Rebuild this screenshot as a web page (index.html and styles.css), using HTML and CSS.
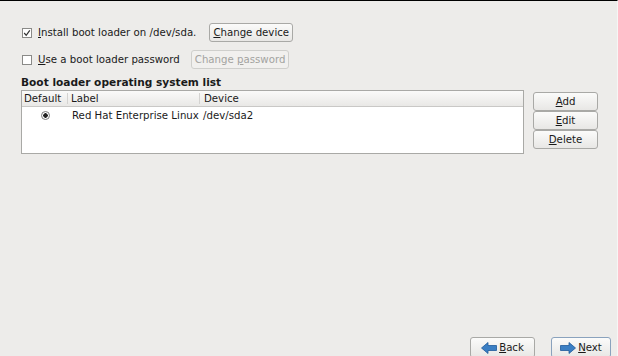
FILE: index.html
```html
<!DOCTYPE html>
<html lang="en">
<head>
    <meta charset="UTF-8">
    <title>Boot loader configuration</title>
    <link rel="stylesheet" href="styles.css">
</head>
<body>
    <div class="screen">
        <div class="content">
            <div class="opt-row">
                <label class="check">
                    <span class="box"><svg width="8" height="8" viewBox="0 0 8 8"><path d="M1.2 4 L3.2 6.3 L6.8 1.3" fill="none" stroke="#333" stroke-width="1.2"/></svg></span>
                    <span><u>I</u>nstall boot loader on /dev/sda.</span>
                </label>
                <button class="btn"><span><u>C</u>hange device</span></button>
            </div>
            <div class="opt-row second">
                <label class="check">
                    <span class="box"></span>
                    <span><u>U</u>se a boot loader password</span>
                </label>
                <button class="btn" disabled><span>Change <u>p</u>assword</span></button>
            </div>

            <h3 class="heading">Boot loader operating system list</h3>

            <div class="list-area">
                <div class="table">
                    <div class="thead">
                        <div class="col col-default">Default</div>
                        <div class="col col-label">Label</div>
                        <div class="col col-device">Device</div>
                    </div>
                    <div class="trow">
                        <div class="col col-default"><span class="radio"></span></div>
                        <div class="col col-label">Red Hat Enterprise Linux</div>
                        <div class="col col-device">/dev/sda2</div>
                    </div>
                </div>
                <div class="side-buttons">
                    <button class="btn wide"><span><u>A</u>dd</span></button>
                    <button class="btn wide"><span><u>E</u>dit</span></button>
                    <button class="btn wide"><span><u>D</u>elete</span></button>
                </div>
            </div>
        </div>

        <div class="footer">
            <button class="btn nav">
                <svg width="16" height="12" viewBox="0 0 16 12"><path d="M0.5 6 L7 0.5 L7 3.5 L15.5 3.5 L15.5 8.5 L7 8.5 L7 11.5 Z" fill="#3b7fc4" stroke="#1f5a9a" stroke-width="0.8"/></svg>
                <span><u>B</u>ack</span>
            </button>
            <button class="btn nav next">
                <svg width="16" height="12" viewBox="0 0 16 12"><path d="M15.5 6 L9 0.5 L9 3.5 L0.5 3.5 L0.5 8.5 L9 8.5 L9 11.5 Z" fill="#3b7fc4" stroke="#1f5a9a" stroke-width="0.8"/></svg>
                <span><u>N</u>ext</span>
            </button>
        </div>
    </div>
</body>
</html>
```

FILE: styles.css
```css
body {
    margin: 0;
    background: #edecea;
    font-family: "DejaVu Sans", sans-serif;
    font-size: 10.2px;
    color: #1a1a1a;
}
.screen {
    height: 356px;
    box-sizing: border-box;
    border-top: 1px solid #000;
    border-right: 1px solid #f6f6f5;
    display: flex;
    flex-direction: column;
    overflow: hidden;
}
.content {
    padding: 22px 0 0 21px;
}
.opt-row {
    display: flex;
    align-items: center;
    gap: 13px;
    height: 19px;
    white-space: nowrap;
}
.opt-row.second {
    margin-top: 8px;
    gap: 11px;
}
.check {
    display: flex;
    align-items: center;
    gap: 6px;
    padding-left: 1px;
}
.box {
    width: 8px;
    height: 8px;
    border: 1px solid #8a8a88;
    background: #fff;
    display: flex;
    align-items: center;
    justify-content: center;
}
.btn {
    font-family: "DejaVu Sans", sans-serif;
    font-size: 10.2px;
    color: #1a1a1a;
    height: 19px;
    padding: 0 3px;
    border: 1px solid #a9a9a6;
    border-radius: 3px;
    background: linear-gradient(#fbfbfa, #e8e7e5);
    display: flex;
    align-items: center;
    justify-content: center;
    white-space: nowrap;
}
.btn:disabled {
    color: #a3a3a0;
    border-color: #cfcfcc;
    background: #f1f0ee;
}
.heading {
    margin: 7px 0 0;
    font-size: 10.6px;
    font-weight: bold;
    line-height: 13px;
}
.list-area {
    display: flex;
    gap: 9px;
    margin-top: 1px;
}
.table {
    width: 501px;
    height: 62px;
    border: 1px solid #a9a9a6;
    background: #fff;
    white-space: nowrap;
}
.thead {
    display: flex;
    height: 15px;
    align-items: center;
    border-bottom: 1px solid #c9c8c6;
    background: linear-gradient(#fafaf9, #e9e8e6);
}
.trow {
    display: flex;
    height: 17px;
    align-items: center;
}
.col {
    box-sizing: border-box;
    padding-left: 2px;
}
.col-default {
    width: 45px;
}
.col-label {
    width: 132px;
    padding-left: 3px;
}
.col-device {
    flex: 1;
    padding-left: 4px;
}
.thead .col + .col {
    border-left: 1px solid #d4d3d1;
}
.trow .col-label {
    padding-left: 5px;
}
.trow .col-default {
    display: flex;
    justify-content: center;
}
.radio {
    width: 7px;
    height: 7px;
    border: 1px solid #7a7a7a;
    border-radius: 50%;
    background: radial-gradient(circle, #222 0 2px, #fff 2.5px);
}
.side-buttons {
    display: flex;
    flex-direction: column;
    margin-top: 2px;
}
.btn.wide {
    width: 65px;
}
.footer {
    margin-top: auto;
    display: flex;
    justify-content: flex-end;
    gap: 16px;
    padding-right: 6px;
    margin-bottom: -2px;
}
.btn.nav {
    width: 65px;
    height: 21px;
    gap: 2px;
}
.btn.nav.next {
    width: 60px;
    border-color: #8aa2bd;
}
```
